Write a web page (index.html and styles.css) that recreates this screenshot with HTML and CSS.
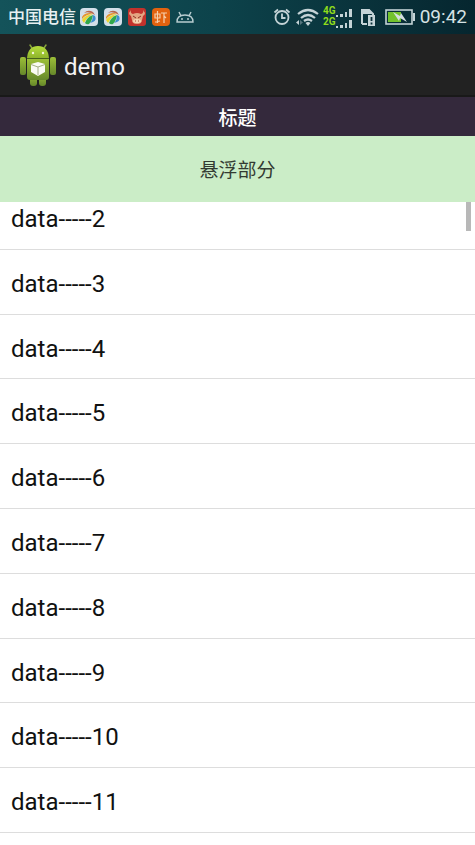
FILE: index.html
```html
<!DOCTYPE html>
<html lang="zh-CN">

<head>
    <meta charset="UTF-8">
    <meta name="viewport" content="width=device-width, initial-scale=1.0">
    <title>demo</title>
    <link rel="stylesheet" href="styles.css">
</head>

<body>
    <!-- Status bar -->
    <div class="status-bar">
        <span class="carrier">中国电信</span>
        <div class="notifications">
            <svg class="app" viewBox="0 0 18 18">
                <rect width="18" height="18" rx="4" fill="#d3dfe9"/>
                <path d="M4 5Q8 1 13 4L15 7Q9 3 4 5Z" fill="#b8684f"/>
                <path d="M2 9Q4 5 10 5L13 6Q6 6 2 11Z" fill="#e8942b"/>
                <path d="M2 12Q5 7 13 6Q7 9 4 15Z" fill="#ecd62f"/>
                <path d="M5 15Q7 9 13 7Q12 13 9 16Q7 17 5 15Z" fill="#31a84b"/>
                <path d="M10 15Q13 12 13 7L15 8Q17 12 13 14Z" fill="#3b8fd0"/>
            </svg>
            <svg class="app" viewBox="0 0 18 18">
                <rect width="18" height="18" rx="4" fill="#d3dfe9"/>
                <path d="M4 5Q8 1 13 4L15 7Q9 3 4 5Z" fill="#b8684f"/>
                <path d="M2 9Q4 5 10 5L13 6Q6 6 2 11Z" fill="#e8942b"/>
                <path d="M2 12Q5 7 13 6Q7 9 4 15Z" fill="#ecd62f"/>
                <path d="M5 15Q7 9 13 7Q12 13 9 16Q7 17 5 15Z" fill="#31a84b"/>
                <path d="M10 15Q13 12 13 7L15 8Q17 12 13 14Z" fill="#3b8fd0"/>
            </svg>
            <svg class="app" viewBox="0 0 18 18">
                <rect width="18" height="18" rx="3" fill="#c2322c"/>
                <path d="M3 2Q2 5 5 6Q9 4 13 6Q16 5 15 2L17 5Q17 7 15 8L14 12Q14 16 9 16Q4 16 4 12L3 8Q1 7 1 5Z" fill="#e3a582"/>
                <path d="M5 8L8 10M13 8L10 10" stroke="#8c3327"/>
                <ellipse cx="9" cy="13" rx="4" ry="2" fill="#f6d3b2"/>
                <path d="M7 13H8M10 13H11" stroke="#a74b35"/>
            </svg>
            <svg class="app" viewBox="0 0 18 18">
                <rect width="18" height="18" rx="4" fill="#e2620f"/>
                <path d="M3 6H8V10H3ZM5.5 3V15M3 14L8 13M9 5H15M12 5V15M12 8L14 10" fill="none" stroke="#f5cfac" stroke-width="1.2"/>
            </svg>
            <svg class="app" viewBox="0 0 18 18">
                <path d="M1 14Q1 7 9 7Q17 7 17 14ZM5 8L3 4M13 8L15 4" fill="none" stroke="#b9cdd0" stroke-width="1.4"/>
                <path d="M5 11H7M11 11H13" stroke="#b9cdd0" stroke-width="1.6"/>
            </svg>
        </div>

        <div class="indicators">
            <svg width="18" height="20" viewBox="0 0 18 20">
                <g fill="none" stroke="#c4d3d6" stroke-width="1.8">
                    <circle cx="9" cy="10.5" r="6.5"/>
                    <path d="M1.5 5.5L5 2.5M16.5 5.5L13 2.5M9 6.5V11H12.5"/>
                </g>
            </svg>
            <svg width="24" height="20" viewBox="0 0 24 20">
                <g fill="none" stroke="#c4d3d6" stroke-width="2.2">
                    <path d="M3 7Q13 -1 23 7M6 11Q13 5 20 11M9 14Q13 11 17 14"/>
                </g>
                <path d="M10.5 16Q13 14 15.5 16L13 19ZM4 13V18L1 15.500Z" fill="#c4d3d6"/>
                <path d="M5 13V18L8 15.500Z" fill="#55757d"/>
            </svg>
            <div class="networks">
                <span class="network">4G
                    <svg width="16" height="8" viewBox="0 0 16 8"><path d="M0 6H2V8H0ZM4 5H7V8H4ZM9 3H11V8H9ZM13 0H16V8H13Z" fill="#c4d3d6"/></svg>
                </span>
                <span class="network">2G
                    <svg width="16" height="8" viewBox="0 0 16 8"><path d="M0 6H2V8H0ZM4 5H7V8H4ZM9 3H11V8H9ZM13 0H16V8H13Z" fill="#c4d3d6"/></svg>
                </span>
            </div>
            <svg class="sim" width="16" height="20" viewBox="0 0 16 20">
                <path d="M2 17V3H9L13 7V8M2 17H7" fill="none" stroke="#c4d3d6" stroke-width="2"/>
                <path d="M2 2H9L13 7H2Z" fill="#c4d3d6"/>
                <rect x="8" y="8" width="7" height="11" fill="#c4d3d6"/>
                <path d="M11.5 10V14M11.5 15.5V17.5" stroke="#092f38" stroke-width="1.8"/>
            </svg>
            <svg class="battery" width="30" height="16" viewBox="0 0 30 16">
                <rect x="1" y="1" width="26" height="14" fill="none" stroke="#c4d3d6" stroke-width="1.6"/>
                <path d="M28 4H30V12H28Z" fill="#c4d3d6"/>
                <path d="M3 3H16V13H3Z" fill="#72c22c"/>
                <path d="M8 3L15 7L16 4L22 13L15 9L14 12Z" fill="#d5dfdf"/>
            </svg>
            <time class="clock">09:42</time>
        </div>
    </div>

    <header class="action-bar">
        <svg class="logo" width="38" height="44" viewBox="0 0 38 44">
            <defs>
                <linearGradient id="head" x1="0" y1="0" x2="0" y2="1">
                    <stop offset="0" stop-color="#b4dc3c"/>
                    <stop offset="1" stop-color="#8fb52c"/>
                </linearGradient>
                <linearGradient id="robot" x1="0" y1="0" x2="0" y2="1">
                    <stop offset="0" stop-color="#9cbf38"/>
                    <stop offset="1" stop-color="#66882a"/>
                </linearGradient>
            </defs>
            <path d="M13 5L11 2M25 5L27 2" stroke="#87a53c" stroke-width="1.5" stroke-linecap="round"/>
            <path d="M8 15Q9 3 19 3Q29 3 30 15Z" fill="url(#head)"/>
            <g fill="url(#robot)">
                <rect x="1" y="14" width="6" height="18" rx="2"/>
                <rect x="31" y="14" width="6" height="18" rx="2"/>
                <rect x="11" y="31" width="7" height="12" rx="3"/>
                <rect x="20" y="31" width="7" height="12" rx="3"/>
                <path d="M8 16H30V34Q30 37 27 37H11Q8 37 8 34Z"/>
            </g>
            <path d="M8 15.5H30" stroke="#47621b"/>
            <circle cx="14" cy="10" r="1.2" fill="#f3f7dc"/>
            <circle cx="24" cy="10" r="1.2" fill="#f3f7dc"/>
            <path d="M19 19L26 21V29L19 33L12 29V21Z" fill="#fafbf3"/>
            <path d="M12 21.5L19 24L26 21.5M19 24V32" fill="none" stroke="#a3ae86"/>
        </svg>
        <h1>demo</h1>
    </header>

    <div class="title">标题</div>
    <div class="floating">悬浮部分</div>

    <main class="content">
        <ul class="list">
            <li>data-----2</li>
            <li>data-----3</li>
            <li>data-----4</li>
            <li>data-----5</li>
            <li>data-----6</li>
            <li>data-----7</li>
            <li>data-----8</li>
            <li>data-----9</li>
            <li>data-----10</li>
            <li>data-----11</li>
        </ul>
        <div class="scroll-thumb"></div>
    </main>
</body>

</html>
```
FILE: styles.css
```css
* {
    box-sizing: border-box;
}

body {
    margin: 0;
    min-height: 100vh;
    display: flex;
    flex-direction: column;
    background: white;
    color: #111;
    font-family: Roboto, "Noto Sans CJK SC", sans-serif;
}

svg {
    display: block;
    flex: none;
}

/* Status bar */
.status-bar {
    display: flex;
    align-items: center;
    height: 34px;
    padding: 0 8px;
    background: linear-gradient(to right, #14535a, #0d434b 45%, #06262f);
    color: #d5e2e4;
}

.carrier {
    font-size: 17px;
    font-weight: 500;
    line-height: 34px;
    color: #e6f0f1;
}

.notifications {
    display: flex;
    gap: 6px;
    margin-left: 4px;
}

.app {
    width: 18px;
    height: 18px;
}

.indicators {
    display: flex;
    align-items: center;
    gap: 4px;
    margin-left: auto;
}

.network {
    display: flex;
    align-items: flex-end;
    height: 11px;
    color: #8fdc1c;
    font-size: 10px;
    font-weight: bold;
    line-height: 12px;
}

.sim {
    margin-left: 4px;
}

.battery {
    margin-left: 5px;
}

.clock {
    margin-left: 1px;
    font-size: 19px;
    line-height: 34px;
}

/* Action bar */
.action-bar {
    display: flex;
    align-items: center;
    gap: 7px;
    height: 63px;
    padding-left: 19px;
    background: #222;
    border-bottom: 2px solid #191919;
    color: #f3f3f3;
}

h1 {
    margin: 0;
    padding-top: 4px;
    font-size: 24px;
    font-weight: normal;
}

.title {
    height: 39px;
    padding-top: 2px;
    background: #34293c;
    color: white;
    font-size: 19px;
    font-weight: 500;
    line-height: 39px;
    text-align: center;
}

.floating {
    height: 66px;
    padding-top: 3px;
    background: #cbedc7;
    color: #333b32;
    font-size: 19px;
    line-height: 64px;
    text-align: center;
}

/* List, scrolled partly under the floating bar */
.content {
    position: relative;
    display: flex;
    flex: 1;
    overflow: hidden;
}

.list {
    display: flex;
    flex: 1;
    flex-direction: column;
    margin: -17px 0 0;
    padding: 0 0 12px;
    list-style: none;
}

.list li {
    flex: 1 0 auto;
    padding: 21px 11px 15px;
    border-bottom: 1px solid #ddd;
    font-size: 24px;
    line-height: 27px;
}

.scroll-thumb {
    position: absolute;
    top: 0;
    right: 4px;
    width: 5px;
    height: 29px;
    background: #b8b8b8;
}
```
